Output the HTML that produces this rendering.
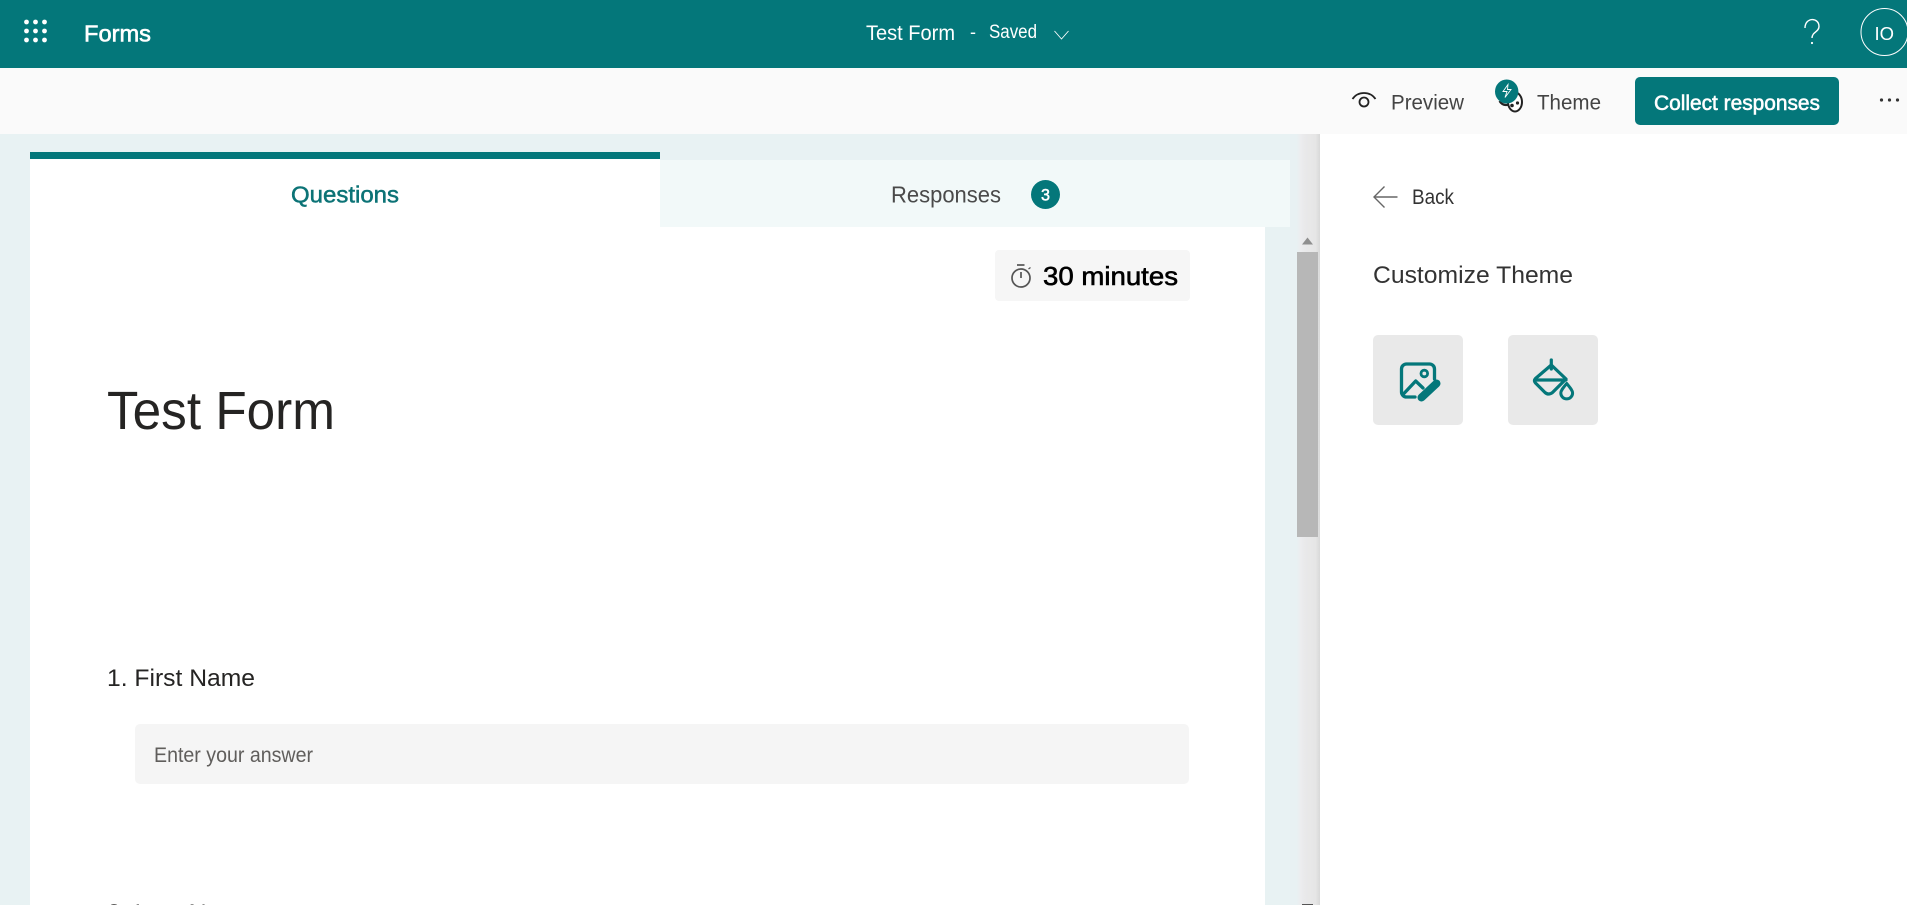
<!DOCTYPE html>
<html lang="en">
<head>
<meta charset="utf-8">
<title>Test Form - Forms</title>
<style>
html,body{margin:0;padding:0;width:1907px;height:905px;overflow:hidden;background:#e8f2f3;font-family:"Liberation Sans",sans-serif}
.b{position:absolute}
#header{left:0;top:0;width:1907px;height:68px;background:#04777a}
#toolbar{left:0;top:68px;width:1907px;height:66px;background:#fafafa}
#card{left:30px;top:161px;width:1235px;height:744px;background:#fff}
#tabbar{left:30px;top:152px;width:630px;height:7px;background:#04777a}
#tabq{left:30px;top:159px;width:630px;height:68px;background:#fff}
#tabr{left:660px;top:160px;width:630px;height:67px;background:#f2f9f9}
#gutter{left:1265px;top:227px;width:25px;height:678px;background:#e8f2f3}
#track{left:1290px;top:134px;width:30px;height:771px;background:linear-gradient(90deg,#e8f1f3 0,#e8f1f3 23%,#ecedef 35%,#e9e9ea 50%,#e6e6e6 85%,#d8d9d9 100%)}
#thumb{left:1297px;top:252px;width:21px;height:285px;background:#b7b7b7}
#panel{left:1320px;top:134px;width:587px;height:771px;background:#fff}
#timer{left:995px;top:250px;width:195px;height:51px;background:#f6f6f6;border-radius:4px}
#input{left:135px;top:724px;width:1054px;height:60px;background:#f5f5f5;border-radius:5px}
#collect{left:1635px;top:77px;width:204px;height:48px;background:#04777a;border-radius:5px}
.tile{top:335px;width:90px;height:90px;background:#e9e9e9;border-radius:5px}
#t1{left:1373px}
#t2{left:1508px}
svg.o{position:absolute;left:0;top:0}
text{font-family:"Liberation Sans",sans-serif}
</style>
</head>
<body>
<div class="b" id="header"></div>
<div class="b" id="toolbar"></div>
<div class="b" id="card"></div>
<div class="b" id="tabbar"></div>
<div class="b" id="tabq"></div>
<div class="b" id="tabr"></div>
<div class="b" id="gutter"></div>
<div class="b" id="track"></div>
<div class="b" id="thumb"></div>
<div class="b" id="panel"></div>
<div class="b" id="timer"></div>
<div class="b" id="input"></div>
<div class="b" id="collect"></div>
<div class="b tile" id="t1"></div>
<div class="b tile" id="t2"></div>

<svg class="o" width="1907" height="905" viewBox="0 0 1907 905" xmlns="http://www.w3.org/2000/svg">
  <!-- waffle -->
  <g fill="#fff">
    <circle cx="26.500" cy="22" r="2.400"/><circle cx="35.500" cy="22" r="2.400"/><circle cx="44.500" cy="22" r="2.400"/>
    <circle cx="26.500" cy="31" r="2.400"/><circle cx="35.500" cy="31" r="2.400"/><circle cx="44.500" cy="31" r="2.400"/>
    <circle cx="26.500" cy="40" r="2.400"/><circle cx="35.500" cy="40" r="2.400"/><circle cx="44.500" cy="40" r="2.400"/>
  </g>
  <text x="84" y="41.500" font-size="23" fill="#fff" stroke="#fff" stroke-width=".6" textLength="67" lengthAdjust="spacingAndGlyphs">Forms</text>

  <text x="866" y="40" font-size="21" fill="#fff" textLength="89" lengthAdjust="spacingAndGlyphs">Test Form</text>
  <text x="970" y="38" font-size="18" fill="#fff" textLength="6" lengthAdjust="spacingAndGlyphs">-</text>
  <text x="989" y="38" font-size="19" fill="#fff" textLength="48" lengthAdjust="spacingAndGlyphs">Saved</text>
  <path d="M1054.500 31 L1061.500 39 L1068.500 31" fill="none" stroke="#fff" stroke-width=".9"/>

  <!-- help -->
  <path d="M1805 28 C1805 17 1819 17 1819 26.500 C1819 32 1812 32 1812 38" fill="none" stroke="#fff" stroke-width="1.400"/>
  <circle cx="1812" cy="43" r="1.100" fill="#fff"/>
  <circle cx="1884.500" cy="32" r="23.500" fill="none" stroke="#fff" stroke-width="1"/>
  <text x="1874.500" y="40" font-size="18.500" fill="#fff" textLength="19.500" lengthAdjust="spacingAndGlyphs">IO</text>

  <!-- preview eye -->
  <g fill="none" stroke="#222" stroke-width="1.800">
    <path d="M1352.500 99 C1358 91 1370 91 1375.500 99"/>
    <circle cx="1364" cy="102" r="4.500"/>
  </g>
  <text x="1391" y="109.500" font-size="21" fill="#444" textLength="73" lengthAdjust="spacingAndGlyphs">Preview</text>

  <!-- theme palette + badge -->
  <ellipse cx="1515" cy="102" rx="7" ry="9.500" fill="#fff" stroke="#222" stroke-width="2"/>
  <circle cx="1512" cy="105.500" r="1.800" fill="#222"/><circle cx="1517.500" cy="103" r="1.600" fill="#222"/>
  <path d="M1499.500 101 Q1503 106.500 1509 104.500" fill="none" stroke="#222" stroke-width="2.200"/>
  <ellipse cx="1506.700" cy="91.500" rx="11.700" ry="12" fill="#04777a"/>
  <path d="M1508 84.500 L1503 91.500 H1507 L1505 97.500 L1511 89.500 H1507.500 Z" fill="none" stroke="#fff" stroke-width=".9"/>
  <text x="1537" y="109.500" font-size="21" fill="#444" textLength="64" lengthAdjust="spacingAndGlyphs">Theme</text>

  <text x="1654" y="110" font-size="21" fill="#fff" stroke="#fff" stroke-width=".55" textLength="166" lengthAdjust="spacingAndGlyphs">Collect responses</text>
  <g fill="#333"><circle cx="1881.500" cy="100" r="1.600"/><circle cx="1889.500" cy="100" r="1.600"/><circle cx="1897.500" cy="100" r="1.600"/></g>

  <!-- tabs -->
  <text x="291" y="202.500" font-size="23" fill="#0c7376" stroke="#0c7376" stroke-width=".5" textLength="108" lengthAdjust="spacingAndGlyphs">Questions</text>
  <text x="891" y="202.500" font-size="23" fill="#4a4a4a" textLength="110" lengthAdjust="spacingAndGlyphs">Responses</text>
  <ellipse cx="1045.500" cy="194.500" rx="14.500" ry="14.500" fill="#04777a"/>
  <text x="1041" y="200.500" font-size="17" fill="#fff" stroke="#fff" stroke-width=".5" textLength="9" lengthAdjust="spacingAndGlyphs">3</text>

  <!-- timer -->
  <g fill="none" stroke="#555" stroke-width="1.700">
    <circle cx="1021" cy="278" r="9"/>
    <path d="M1017 265 h7.500"/>
    <path d="M1021 272 v6"/>
    <path d="M1028.500 269 l2 -1.500" stroke-width="1.200"/>
  </g>
  <text x="1043" y="285" font-size="26" fill="#000" stroke="#000" stroke-width=".6" textLength="135" lengthAdjust="spacingAndGlyphs">30 minutes</text>

  <!-- form body -->
  <text x="107" y="429" font-size="54" fill="#252423" textLength="228" lengthAdjust="spacingAndGlyphs">Test Form</text>
  <text x="107" y="686" font-size="24.500" fill="#252423" textLength="148" lengthAdjust="spacingAndGlyphs">1. First Name</text>
  <text x="154" y="762" font-size="21" fill="#605e5c" textLength="159" lengthAdjust="spacingAndGlyphs">Enter your answer</text>
  <text x="107" y="921" font-size="24.500" fill="#252423" textLength="148" lengthAdjust="spacingAndGlyphs">2. Last Name</text>

  <!-- scrollbar arrows -->
  <path d="M1302 244.500 L1307.500 237.500 L1313 244.500 Z" fill="#8f8f8f"/>
  <rect x="1302" y="904" width="11" height="1" fill="#555"/>

  <!-- side panel -->
  <g fill="none" stroke="#666" stroke-width="1.400">
    <path d="M1397.500 197 H1374.500"/>
    <path d="M1384.500 186.500 L1374 197 L1384.500 207.500"/>
  </g>
  <text x="1412" y="204" font-size="21" fill="#333" textLength="42" lengthAdjust="spacingAndGlyphs">Back</text>
  <text x="1373" y="283" font-size="24" fill="#333" textLength="200" lengthAdjust="spacingAndGlyphs">Customize Theme</text>

  <!-- image-edit icon -->
  <g transform="translate(1373 335)" fill="none" stroke="#04777a" stroke-width="3.300" stroke-linecap="round" stroke-linejoin="round">
    <path d="M42 62 H33.500 a5 5 0 0 1 -5 -5 V34 a5 5 0 0 1 5 -5 H56.500 a5 5 0 0 1 5 5 V44"/>
    <circle cx="51.300" cy="38.500" r="3.300" stroke-width="2.800"/>
    <path d="M30 59.500 L42.700 46 L50 53"/>
    <path d="M63.500 48.500 L48.500 62.500" stroke-width="8"/>
  </g>

  <!-- paint bucket icon -->
  <g transform="translate(1508 335)" fill="none" stroke="#04777a" stroke-width="3.200" stroke-linecap="round" stroke-linejoin="round">
    <path d="M43.300 30 L58 44 L44.500 57.500 Q40.500 60.500 37 57.500 L27.500 48 Q25.500 45.500 27.500 43.500 Z"/>
    <path d="M27 45 H58"/>
    <path d="M43.300 25 V34"/>
    <path d="M58.700 48.500 C55 53 52.800 55.500 52.800 58 A5.900 5.900 0 0 0 64.600 58 C64.600 55.500 62.400 53 58.700 48.500 Z" stroke-width="3"/>
  </g>
</svg>
</body>
</html>
